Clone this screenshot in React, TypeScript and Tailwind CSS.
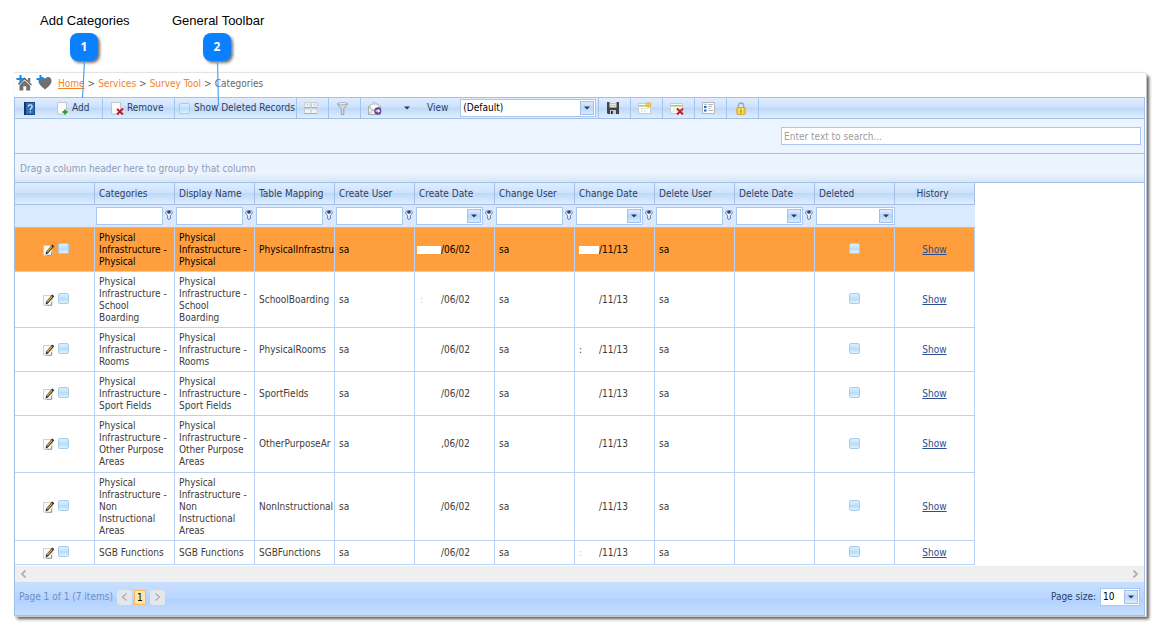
import type { ReactNode } from "react";

const bar =
  "bg-[linear-gradient(to_bottom,#e0edff_0%,#cde2fd_45%,#bcd8f8_50%,#e0eeff_100%)]";
const arrowBox =
  "flex h-3.5 w-3.5 items-center justify-center border border-[#a3c0e8] bg-[linear-gradient(to_bottom,#dcebff,#b9d5f8_50%,#d9eaff)]";
const field = "h-[18px] border border-[#a9c7f0] bg-white";

function Arrow() {
  return (
    <svg width="6" height="4" viewBox="0 0 6 4" aria-hidden="true">
      <path d="M0 0.5h6L3 3.6z" fill="#27395c" />
    </svg>
  );
}

function Check({ label, id }: { label: string; id?: string }) {
  return (
    <input
      id={id}
      type="checkbox"
      aria-label={label}
      className="block h-[11px] w-[11px] shrink-0 appearance-none rounded-[2px] border border-[#a8cdea] bg-[linear-gradient(to_bottom,#d9f0fd_0%,#c0e2fb_48%,#b3dafa_52%,#e0f3fe_100%)]"
    />
  );
}

function Dropdown({ label, className, options }: { label: string; className: string; options: string[] }) {
  return (
    <div className={`relative ${field} ${className}`}>
      <select
        aria-label={label}
        className="block h-4 w-full appearance-none bg-transparent pl-0.5 text-[10px] leading-4 text-black outline-none"
      >
        {options.map((o) => (
          <option key={o}>{o}</option>
        ))}
      </select>
      <span className={`pointer-events-none absolute top-px right-px ${arrowBox}`}>
        <Arrow />
      </span>
    </div>
  );
}

function FilterPin() {
  return (
    <svg width="8" height="10" viewBox="0 0 8 10" aria-hidden="true">
      <path d="M.6 2.6C.6 1.1 2 .5 4 .5s3.400.6 3.400 2.100C7.400 4.200 5.400 4.800 5.400 6.200v2.400L4 9.500 2.600 8.600V6.200C2.600 4.800.6 4.200.6 2.600z" fill="#eef4fd" stroke="#5f78a6" strokeWidth="1" />
      <ellipse cx="4" cy="2.300" rx="1.900" ry="1.400" fill="#2b4068" />
    </svg>
  );
}

function HomeIcon() {
  return (
    <svg width="16" height="17" viewBox="0 0 16 17" aria-hidden="true">
      <path d="M8.500 3.200 16 10.400l-1.100 1.200L8.500 5.600 3 11l-1.200-1.200z" fill="#6f6f6f" />
      <path d="M12 4h2.200v4.600L12 6.500z" fill="#6f6f6f" />
      <path d="M8.500 6.400 14.200 11.700V16.500h-4v-4.300H7.300v4.300H3.500v-5.300z" fill="#6f6f6f" />
      <path d="M4.500 1v8M.5 5h8" stroke="#1f86dd" strokeWidth="2" />
    </svg>
  );
}

function HeartIcon() {
  return (
    <svg width="16" height="17" viewBox="0 0 16 17" aria-hidden="true">
      <path d="M9 15.500C5 12.500 2.500 10 2.500 7 2.500 4.500 4 3 5.800 3 7.300 3 8.500 3.800 9 5c.5-1.200 1.700-2 3.200-2C14 3 15.500 4.500 15.500 7c0 3-2.500 5.500-6.500 8.500z" fill="#6f6f6f" />
      <path d="M4.500 1v8M.5 5h8" stroke="#1f86dd" strokeWidth="2" />
    </svg>
  );
}

function HelpIcon() {
  return (
    <svg width="11" height="13" viewBox="0 0 11 13" aria-hidden="true">
      <path d="M0 0h11v13H0z" fill="#2f6fb8" />
      <path d="M0 0h2v13H0z" fill="#16365f" />
      <path d="M2 0h9v1H2zM10 0h1v13h-1zM2 12h9v1H2z" fill="#1c4a86" />
      <path d="M4.200 4.500c0-2.200 4-2.200 4 0C8.200 6 6.200 6 6.200 8" stroke="#dcecff" strokeWidth="1.200" fill="none" />
      <path d="M5.600 9.300H6.900v1.300H5.600z" fill="#dcecff" />
    </svg>
  );
}

function Sheet({ children }: { children: ReactNode }) {
  return (
    <svg width="13" height="13" viewBox="0 0 13 13" aria-hidden="true">
      <path d="M.5.5h9v11.500H.5z" fill="#fbfbfa" stroke="#b9bcc2" strokeWidth="0.8" />
      {children}
    </svg>
  );
}

function AddIcon() {
  return (
    <Sheet>
      <path d="M8 7.500v5M5.500 10h5" stroke="#2e9a2e" strokeWidth="1.800" />
    </Sheet>
  );
}

function RemoveIcon() {
  return (
    <Sheet>
      <path d="m6 7 6 5.500M12 6.500 6 12.500" stroke="#c8141c" strokeWidth="1.900" />
    </Sheet>
  );
}

function CustomizeIcon() {
  return (
    <svg width="14" height="12" viewBox="0 0 14 12" aria-hidden="true">
      <path d="M.5.5h5.500v5H.5zM7.500.5H13v5H7.500zM.5 7h12.500v4.500H.5z" fill="#f3f3f3" stroke="#c6c8cb" strokeWidth="0.8" />
      <path d="M.5 5.500h5.500M7.500 5.500H13M.5 11.500H13" stroke="#a2a5a9" strokeWidth="0.8" />
      <path d="M3.300 1.500v2M10.300 1.500v2M7 8v2.500" stroke="#b5b8bc" />
    </svg>
  );
}

function FunnelIcon() {
  return (
    <svg width="11" height="13" viewBox="0 0 11 13" aria-hidden="true">
      <path d="M.5 1.500h10v1L6.800 6.500v6H4.300v-6L.5 2.500z" fill="#d9dadc" stroke="#8c9096" strokeWidth="0.8" />
      <ellipse cx="5.500" cy="1.700" rx="4.800" ry="1.100" fill="#f4f4f4" stroke="#92969c" strokeWidth="0.7" />
    </svg>
  );
}

function MailIcon() {
  return (
    <svg width="14" height="13" viewBox="0 0 14 13" aria-hidden="true">
      <path d="M.5 4.500 6.500.5l6 4v8H.5z" fill="#efefef" stroke="#9b9ea3" strokeWidth="0.8" />
      <path d="M2.500 2.700h8v4l-4 2-4-2z" fill="#fff" stroke="#bfc2c6" strokeWidth="0.6" />
      <path d="m.8 5 5.700 4 5.700-4M.8 12 5 8" stroke="#9b9ea3" strokeWidth="0.7" fill="none" />
      <circle cx="9.800" cy="8.900" r="3.600" fill="#6b459c" />
      <path d="M7.700 8.900h3.500M9.900 7.400l1.600 1.500-1.600 1.500" stroke="#fff" strokeWidth="1.100" fill="none" />
    </svg>
  );
}

function SaveIcon() {
  return (
    <svg width="12" height="12" viewBox="0 0 12 12" aria-hidden="true">
      <path d="M0 0h12v12H1l-1-1z" fill="#41454b" />
      <path d="M2.500 0h7v5.500h-7z" fill="#e6e8ea" />
      <path d="M3 1.500h6M3 3.500h6" stroke="#a9adb2" strokeWidth="0.700" />
      <path d="M3 8h6v4H3z" fill="#c8cbce" />
      <path d="M4 9h1.800v3H4z" fill="#26282c" />
    </svg>
  );
}

function ViewSheet({ children }: { children: ReactNode }) {
  return (
    <svg width="14" height="13" viewBox="0 0 14 13" aria-hidden="true">
      <path d="M.5 1.500h12v10H.5z" fill="#fcfcfc" stroke="#bfc2c7" strokeWidth="0.8" />
      <path d="M1 3.800h11" stroke="#8fce45" strokeWidth="1.400" />
      <path d="M3 6.500h1.500M6 6.500h1.500M9 6.500h1.500M3 9h1.500M6 9h1.500" stroke="#c7cace" />
      {children}
    </svg>
  );
}

function NewViewIcon() {
  return (
    <ViewSheet>
      <circle cx="10.500" cy="2.800" r="2.400" fill="#f8c93a" stroke="#dba322" strokeWidth="0.6" />
    </ViewSheet>
  );
}

function DeleteViewIcon() {
  return (
    <ViewSheet>
      <path d="m7 6.500 6 6M13 6.500l-6 6" stroke="#cc1820" strokeWidth="1.900" />
    </ViewSheet>
  );
}

function FormIcon() {
  return (
    <svg width="13" height="12" viewBox="0 0 13 12" aria-hidden="true">
      <path d="M.5.5h12v11H.5z" fill="#fbfbfb" stroke="#aeb2b8" strokeWidth="0.9" />
      <path d="M2 4h2.500v2H2zM2 7.500h2.500v2H2z" fill="#1c69c4" />
      <path d="M2 2.300h3M6.500 2.500h4.500M6.500 4.500h3.500M6.500 6.500h2M6.500 8.500h4.500" stroke="#b0b4b9" />
    </svg>
  );
}

function LockIcon() {
  return (
    <svg width="10" height="13" viewBox="0 0 10 13" aria-hidden="true">
      <path d="M2.300 6V3.600c0-3.500 5.400-3.500 5.400 0V6" fill="none" stroke="#a3a6ab" strokeWidth="1.300" />
      <rect x="0.800" y="5.500" width="8.400" height="7" rx="0.800" fill="#edc62e" stroke="#c99d1c" strokeWidth="0.700" />
      <path d="M3 6v6M6.800 6v6" stroke="#fbe88a" strokeWidth="1.100" />
      <path d="M5 8v2.500" stroke="#a77d0c" strokeWidth="0.900" />
    </svg>
  );
}

function EditIcon() {
  return (
    <svg width="12" height="12" viewBox="0 0 12 12" aria-hidden="true">
      <path d="M.5 1.500h8.500v9.800H.5z" fill="#fafafa" stroke="#c3c5c9" strokeWidth="0.800" />
      <path d="M8.500 8v3.300H3.500" stroke="#90939a" strokeWidth="0.900" fill="none" />
      <path d="m2.500 10.500.8-3L9.200.6l2.100 1.600-6.400 7.300z" fill="#2d2617" />
      <path d="m4.200 8 5-5.700" stroke="#e3b64c" strokeWidth="1.200" />
    </svg>
  );
}

function ToolButton({ label, children, plain }: { label: string; children: ReactNode; plain?: boolean }) {
  return (
    <button
      type="button"
      aria-label={label}
      className={`flex w-8 items-center justify-center pr-1 ${plain ? "" : "border-r border-[#a3c4ee]"}`}
    >
      {children}
    </button>
  );
}

interface Row {
  name: string;
  table: string;
  height: string;
  created: string;
  createdMark?: string;
  changedMark?: string;
}

const rows: Row[] = [
  { name: "Physical Infrastructure - Physical", table: "PhysicalInfrastru", height: "h-11", created: "/06/02" },
  { name: "Physical Infrastructure - School Boarding", table: "SchoolBoarding", height: "h-14", created: "/06/02", createdMark: "text-[#e3b98d]" },
  { name: "Physical Infrastructure - Rooms", table: "PhysicalRooms", height: "h-11", created: "/06/02", changedMark: "text-[#3c3c3c]" },
  { name: "Physical Infrastructure - Sport Fields", table: "SportFields", height: "h-11", created: "/06/02" },
  { name: "Physical Infrastructure - Other Purpose Areas", table: "OtherPurposeAr", height: "h-[57px]", created: ",06/02" },
  { name: "Physical Infrastructure - Non Instructional Areas", table: "NonInstructional", height: "h-[68px]", created: "/06/02" },
  { name: "SGB Functions", table: "SGBFunctions", height: "h-6", created: "/06/02", changedMark: "text-[#e3b98d]" },
];

const columns: { title: string; filter: "text" | "date" | "list" | "none" }[] = [
  { title: "Categories", filter: "text" },
  { title: "Display Name", filter: "text" },
  { title: "Table Mapping", filter: "text" },
  { title: "Create User", filter: "text" },
  { title: "Create Date", filter: "date" },
  { title: "Change User", filter: "text" },
  { title: "Change Date", filter: "date" },
  { title: "Delete User", filter: "text" },
  { title: "Delete Date", filter: "date" },
  { title: "Deleted", filter: "list" },
  { title: "History", filter: "none" },
];

function MaskedDate({ text, masked, mark, wide }: { text: string; masked: boolean; mark?: string; wide?: boolean }) {
  return (
    <span className="flex items-center">
      <span className={`${wide ? "w-6" : "w-5"} ${masked ? "h-2 bg-white" : ""} ${wide ? "pl-[3px]" : ""}`}>
        {mark && <span className={mark}>:</span>}
      </span>
      {text}
    </span>
  );
}

function FilterCell({ title, filter }: { title: string; filter: string }) {
  if (filter === "none") return null;
  if (filter === "list") return <Dropdown label={`Filter ${title}`} className="w-full" options={[""]} />;
  return (
    <div className="flex items-center">
      {filter === "text" ? (
        <input aria-label={`Filter ${title}`} className={`${field} w-[67px] min-w-0 px-0.5 outline-none`} />
      ) : (
        <div className={`${field} flex w-[67px] items-start justify-end p-px`}>
          <input aria-label={`Filter ${title}`} className="h-3.5 w-0 min-w-0 flex-1 outline-none" />
          <button type="button" aria-label={`Pick ${title}`} className={arrowBox}>
            <Arrow />
          </button>
        </div>
      )}
      <button type="button" aria-label={`${title} filter condition`} className="ml-0.5 pb-0.5">
        <FilterPin />
      </button>
    </div>
  );
}

function Callout({ number, label, width, dx, length }: { number: string; label: string; width: string; dx: number; length: number }) {
  return (
    <div className={`flex flex-col items-center ${width}`}>
      <span className="w-full text-[13px] leading-4 whitespace-nowrap text-black">{label}</span>
      <div className="relative mt-1 flex h-7 w-7 items-center justify-center rounded-lg bg-[#0a80ff] font-['Open_Sans',sans-serif] text-[12px] font-bold text-white shadow-[2px_2px_3px_rgba(0,0,0,0.55)]">
        {number}
        <svg className="pointer-events-none absolute top-7 left-2.5 z-10" width="10" height={length} aria-hidden="true">
          <path d={`M4.500 0L${4.5 + dx} ${length}`} stroke="#4aa3f5" strokeWidth="1.200" />
        </svg>
      </div>
    </div>
  );
}

export default function App() {
  const cell = "border-r border-b border-[#b9d3f5]";
  return (
    <main className="min-h-screen bg-white font-['DejaVu_Sans_Condensed','DejaVu_Sans',sans-serif] text-[10px] leading-3 text-[#3c3c3c]">
      <header className="flex h-[73px] items-start gap-11 pt-[13px] pl-10 font-['Liberation_Sans',sans-serif]">
        <Callout number="1" label="Add Categories" width="w-22" dx={-2} length={37} />
        <Callout number="2" label="General Toolbar" width="w-[90px]" dx={1} length={45} />
      </header>

      <section className="mr-2.5 ml-3.5 bg-white pr-px shadow-[0_-1px_1px_rgba(0,0,0,0.1),1px_1px_0_#c9c9c9,3px_3px_3px_rgba(0,0,0,0.65)]">
        <nav aria-label="Breadcrumb" className="flex h-6 items-center pl-0.5">
          <button type="button" aria-label="Set as home page" className="-mt-1.5">
            <HomeIcon />
          </button>
          <button type="button" aria-label="Add to favourites" className="-mt-1.5 ml-1">
            <HeartIcon />
          </button>
          <div className="-mt-[3px] ml-1.5 flex gap-[3px] text-[#666]">
            <a href="#home" className="text-[#f5822a] underline">Home</a>
            <span>&gt;</span>
            <a href="#services" className="text-[#f5822a]">Services</a>
            <span>&gt;</span>
            <a href="#survey" className="text-[#f5822a]">Survey Tool</a>
            <span>&gt;</span>
            <span>Categories</span>
          </div>
        </nav>

        <div className="border border-[#a3c0e8]">
          <div className={`flex h-[21px] border-b border-[#a3c0e8] text-[#2c3f63] ${bar}`}>
            <ToolButton label="Help" plain>
              <HelpIcon />
            </ToolButton>
            <button type="button" className="flex w-14 items-center gap-0.5 border-r border-[#a3c4ee] pl-2.5">
              <AddIcon />
              Add
            </button>
            <button type="button" className="flex w-[72px] items-center gap-[3px] border-r border-[#a3c4ee] pl-2">
              <RemoveIcon />
              Remove
            </button>
            <div className="flex w-[122px] items-center gap-1 border-r border-[#a3c4ee] pl-1 whitespace-nowrap">
              <Check id="show-deleted" label="Show Deleted Records" />
              <label htmlFor="show-deleted">Show Deleted Records</label>
            </div>
            <ToolButton label="Customise columns">
              <CustomizeIcon />
            </ToolButton>
            <ToolButton label="Filter">
              <FunnelIcon />
            </ToolButton>
            <ToolButton label="Export by mail" plain>
              <MailIcon />
            </ToolButton>
            <ToolButton label="Export options" plain>
              <Arrow />
            </ToolButton>
            <span className="flex items-center pr-3 pl-0.5">View</span>
            <div className="flex w-[139px] items-center border-r border-[#a3c4ee]">
              <Dropdown label="View" className="w-[136px]" options={["(Default)"]} />
            </div>
            <ToolButton label="Save view"><SaveIcon /></ToolButton>
            <ToolButton label="New view"><NewViewIcon /></ToolButton>
            <ToolButton label="Delete view"><DeleteViewIcon /></ToolButton>
            <ToolButton label="View details"><FormIcon /></ToolButton>
            <ToolButton label="Lock view"><LockIcon /></ToolButton>
          </div>

          <div className="flex h-[35px] items-center justify-end border-b border-[#a3c0e8] bg-[#ecf4ff] pr-[3px]">
            <input
              aria-label="Search"
              placeholder="Enter text to search..."
              className={`${field} w-[360px] px-0.5 outline-none placeholder:text-[#9d9d9d]`}
            />
          </div>

          <div className="flex h-[29px] items-center border-b border-[#a3c0e8] bg-[linear-gradient(to_bottom,#ecf4ff_0%,#ebf3fe_70%,#d5e6f6_100%)] pt-0.5 pl-[5px] text-[#8e9db5]">
            Drag a column header here to group by that column
          </div>

          <table className="w-[960px] table-fixed border-separate border-spacing-0">
            <thead>
              <tr className="h-[22px] text-left text-[#2c3f63]">
                <th aria-label="Actions" className={`border-r border-b border-[#a3c0e8] p-0 ${bar}`} />
                {columns.map(({ title, filter }) => (
                  <th
                    key={title}
                    className={`border-r border-b border-[#a3c0e8] p-0 font-normal ${bar} ${filter === "none" ? "pr-1 text-center" : "pl-1"}`}
                  >
                    {title}
                  </th>
                ))}
              </tr>
              <tr className="h-[23px] bg-[#dbe9ff]">
                <td className="border-b border-[#a3c0e8] p-0" />
                {columns.map(({ title, filter }) => (
                  <td key={title} className="border-b border-[#a3c0e8] p-0 pl-px">
                    <FilterCell title={title} filter={filter} />
                  </td>
                ))}
              </tr>
            </thead>
            <tbody>
              {rows.map((r, i) => (
                <tr key={r.name} className={`${r.height} ${i === 0 ? "bg-[#ff9e3c] text-black" : "bg-white"}`}>
                  <td className={`${cell} p-0`}>
                    <div className="flex items-center justify-center gap-[3px] pb-0.5 pl-0.5">
                      <button type="button" aria-label={`Edit ${r.name}`} className="mt-0.5">
                        <EditIcon />
                      </button>
                      <Check label={`Select ${r.name}`} />
                    </div>
                  </td>
                  <td className={`${cell} py-0 pr-1 pl-1`}>{r.name}</td>
                  <td className={`${cell} py-0 pr-1 pl-1`}>{r.name}</td>
                  <td className={`${cell} overflow-hidden py-0 pr-0 pl-1 whitespace-nowrap`}>{r.table}</td>
                  <td className={`${cell} py-0 pr-0 pl-1`}>sa</td>
                  <td className={`${cell} py-0 pr-0 pl-0.5`}>
                    <MaskedDate text={r.created} masked={i === 0} mark={r.createdMark} wide />
                  </td>
                  <td className={`${cell} py-0 pr-0 pl-1`}>sa</td>
                  <td className={`${cell} py-0 pr-0 pl-1`}>
                    <MaskedDate text="/11/13" masked={i === 0} mark={r.changedMark} />
                  </td>
                  <td className={`${cell} py-0 pr-0 pl-1`}>sa</td>
                  <td className={`${cell} p-0`} />
                  <td className={`${cell} p-0`}>
                    <div className="flex justify-center pb-0.5">
                      <Check label={`${r.name} deleted`} />
                    </div>
                  </td>
                  <td className={`${cell} p-0 text-center`}>
                    <a href="#history" className="text-[#2d4f8f] underline">Show</a>
                  </td>
                </tr>
              ))}
            </tbody>
          </table>

          <div className="mt-px flex h-4 items-center justify-between bg-[#efefef] px-[5px]">
            <button type="button" aria-label="Scroll left">
              <svg width="7" height="8" viewBox="0 0 7 8" aria-hidden="true">
                <path d="M5.500.5 2 4l3.500 3.500" fill="none" stroke="#b0b0b0" strokeWidth="1.800" />
              </svg>
            </button>
            <button type="button" aria-label="Scroll right">
              <svg width="7" height="8" viewBox="0 0 7 8" aria-hidden="true">
                <path d="M1.500.5 5 4 1.500 7.500" fill="none" stroke="#b0b0b0" strokeWidth="1.800" />
              </svg>
            </button>
          </div>

          <footer className="flex h-[33px] items-center justify-between bg-[linear-gradient(to_bottom,#c9dfff_0%,#b9d6ff_48%,#b0d1ff_52%,#c6deff_100%)] pr-1 pb-[3px] pl-1">
            <div className="flex items-center">
              <span className="mr-1 text-[#6d8fc4]">Page 1 of 1 (7 items)</span>
              <button type="button" aria-label="Previous page" className="flex h-[15px] w-[15px] items-center justify-center rounded-[3px] bg-[#e3e6ea]">
                <svg width="7" height="8" viewBox="0 0 7 8" aria-hidden="true">
                  <path d="M5.500.5 1.500 4l4 3.500" fill="none" stroke="#a6a9ae" strokeWidth="1.100" />
                </svg>
              </button>
              <button type="button" aria-current="page" className="mx-0.5 h-[15px] w-3 border border-[#ffb75e] bg-[#ffe6a6] text-center leading-[13px] text-black">
                1
              </button>
              <button type="button" aria-label="Next page" className="ml-0.5 flex h-[15px] w-[15px] items-center justify-center rounded-[3px] bg-[#e3e6ea]">
                <svg width="7" height="8" viewBox="0 0 7 8" aria-hidden="true">
                  <path d="M1.500.5 5.500 4l-4 3.500" fill="none" stroke="#a6a9ae" strokeWidth="1.100" />
                </svg>
              </button>
            </div>
            <div className="flex items-center gap-1 text-[#2c3f63]">
              Page size:
              <Dropdown label="Page size" className="w-10" options={["10"]} />
            </div>
          </footer>
        </div>
      </section>
    </main>
  );
}
